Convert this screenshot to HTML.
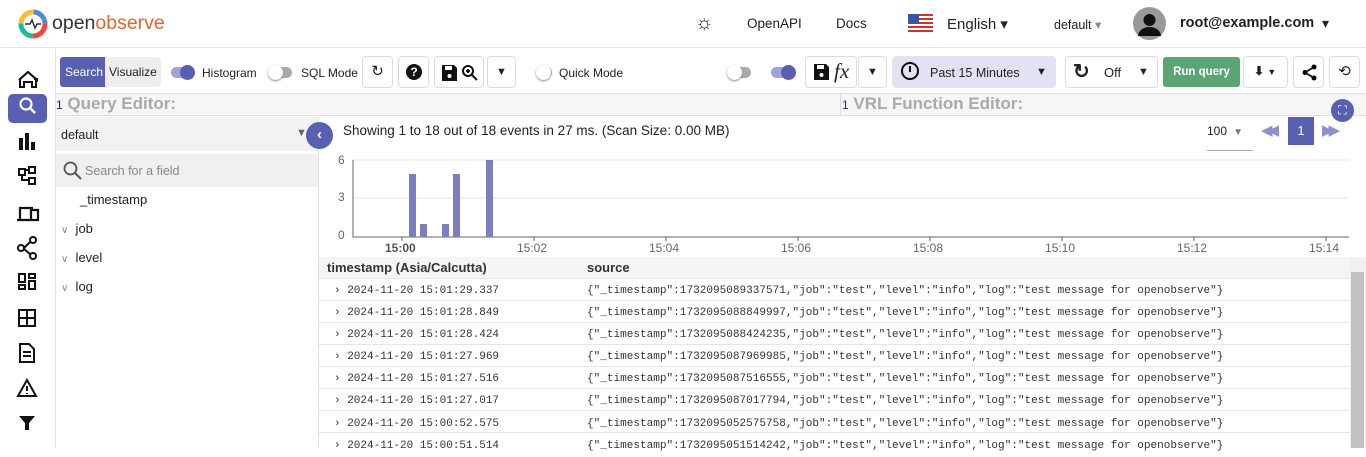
<!DOCTYPE html>
<html><head><meta charset="utf-8"><style>
*{box-sizing:border-box;margin:0;padding:0}
body{width:1366px;height:448px;overflow:hidden;background:#fff;font-family:"Liberation Sans",sans-serif;color:#222;position:relative;font-size:13px}
.a{position:absolute}
.btn{position:absolute;border:1px solid #ddd;border-radius:4px;background:#fff;height:32px;top:56px}
.mono{font-family:"Liberation Mono",monospace;font-size:11px;color:#333}
.row{position:absolute;left:319px;width:1031px;height:22px;border-bottom:1px solid #e6e6e6}
</style></head><body>
<!-- header -->
<div class="a" style="left:0;top:0;width:1366px;height:48px;border-bottom:1px solid #e0e0e0"></div>
<svg class="a" style="left:18px;top:9px" width="30" height="30" viewBox="0 0 30 30"><circle cx="15" cy="15" r="12" fill="none" stroke="#e44" stroke-width="5" stroke-dasharray="19 57"/><circle cx="15" cy="15" r="12" fill="none" stroke="#2b9" stroke-width="5" stroke-dasharray="0 19 19 38"/><circle cx="15" cy="15" r="12" fill="none" stroke="#fb3" stroke-width="5" stroke-dasharray="0 38 19 19"/><circle cx="15" cy="15" r="12" fill="none" stroke="#58c" stroke-width="5" stroke-dasharray="0 57 19 0"/><path d="M7 15h5l2-4 3 8 2-4h4" fill="none" stroke="#333" stroke-width="1.5"/></svg>
<div class="a" style="left:52px;top:12px;font-size:19.5px;color:#333">open<span style="color:#e8632b">observe</span></div>
<div class="a" style="left:695px;top:12px;font-size:20px">☼</div>
<div class="a" style="left:747px;top:16px;font-size:13.5px">OpenAPI</div>
<div class="a" style="left:836px;top:16px;font-size:13.5px">Docs</div>
<svg class="a" style="left:908px;top:14px" width="25" height="18"><rect width="25" height="18" fill="#fff"/><g fill="#c33"><rect y="0" width="25" height="2"/><rect y="4" width="25" height="2"/><rect y="8" width="25" height="2"/><rect y="12" width="25" height="2"/><rect y="16" width="25" height="2"/></g><rect width="11" height="10" fill="#35a"/></svg>
<div class="a" style="left:947px;top:15px;font-size:15px">English ▾</div>
<div class="a" style="left:1054px;top:17px;font-size:12.5px">default <span style="color:#888">▾</span></div>
<svg class="a" style="left:1133px;top:7px" width="33" height="33"><circle cx="16.5" cy="16.5" r="16.5" fill="#999"/><circle cx="16.5" cy="13" r="6" fill="#111"/><path d="M5 29a11.5 9 0 0 1 23 0z" fill="#111"/></svg>
<div class="a" style="left:1180px;top:15px;font-size:14.5px;font-weight:bold">root@example.com</div>
<div class="a" style="left:1322px;top:15px;font-size:14px">▾</div>
<!-- sidebar -->
<div class="a" style="left:55px;top:49px;width:1px;height:399px;background:#e0e0e0"></div>
<div class="a" style="left:8px;top:94px;width:39px;height:29px;background:#5960b2;border-radius:5px"></div>
<svg class="a" style="left:0;top:60px" width="55" height="380" fill="#111"><path d="M19 20l9-8 9 8v-1h-2v-1M20 19v8h4v-5h8v5h4v-8l-8-7z" fill="none" stroke="#111" stroke-width="2"/>
<circle cx="26" cy="44" r="5.5" fill="none" stroke="#fff" stroke-width="2.2"/><path d="M30 48l5 5" stroke="#fff" stroke-width="2.5"/>
<rect x="19" y="78" width="4" height="12"/><rect x="25" y="73" width="4" height="17"/><rect x="31" y="82" width="4" height="8"/>
<path d="M19 109h6v6h-6zM29 107h6v6h-6zM29 118h6v6h-6zM22 115v5h7M25 110h4" fill="none" stroke="#111" stroke-width="2"/>
<path d="M20 159v-11h13M17 160h18M31 150h7v10h-7z" fill="none" stroke="#111" stroke-width="2.2"/>
<circle cx="21" cy="188" r="3" fill="none" stroke="#111" stroke-width="2"/><circle cx="33" cy="180" r="3" fill="none" stroke="#111" stroke-width="2"/><circle cx="33" cy="196" r="3" fill="none" stroke="#111" stroke-width="2"/><path d="M24 188l6-6M24 189l6 5" stroke="#111" stroke-width="2"/>
<path d="M19 214h6v8h-6zM29 214h6v4h-6zM19 225h6v4h-6zM29 221h6v8h-6z" fill="none" stroke="#111" stroke-width="2"/>
<path d="M19 250h16v16h-16zM27 250v16M19 258h16" fill="none" stroke="#111" stroke-width="2"/>
<path d="M20 284h9l5 5v13h-14zM23 292h8M23 296h8" fill="none" stroke="#111" stroke-width="2"/>
<path d="M27 320l9 16h-18zM27 326v5M27 333v1" fill="none" stroke="#111" stroke-width="2"/>
<path d="M19 356h16l-6 7v7h-4v-7z"/></svg>
<!-- toolbar -->
<div class="a" style="left:56px;top:93px;width:1310px;height:1px;background:#e0e0e0"></div>
<div class="a" style="left:60px;top:57px;width:45px;height:30px;background:#5960b2;color:#fff;border-radius:3px 0 0 3px;font-size:12px;padding:8px 0 0 5px">Search</div>
<div class="a" style="left:105px;top:57px;width:56px;height:30px;background:#eee;border-radius:0 3px 3px 0;font-size:12px;padding:8px 0 0 4px">Visualize</div>
<div class="a" style="left:171px;top:67px;width:22px;height:11px;border-radius:6px;background:#9fa3d8"></div><div class="a" style="left:180px;top:65px;width:15px;height:15px;border-radius:50%;background:#5960b2"></div>
<div class="a" style="left:202px;top:66px;font-size:12px">Histogram</div>
<div class="a" style="left:272px;top:67px;width:20px;height:11px;border-radius:6px;background:#aaa"></div><div class="a" style="left:268px;top:65px;width:15px;height:15px;border-radius:50%;background:#fff;box-shadow:0 1px 2px #888"></div>
<div class="a" style="left:301px;top:66px;font-size:12px">SQL Mode</div>
<div class="btn" style="left:362px;width:31px;text-align:center;font-size:15px;padding-top:5px">↻</div>
<div class="btn" style="left:398px;width:31px"><div class="a" style="left:7px;top:7px;width:16px;height:16px;border-radius:50%;background:#111;color:#fff;font-size:12px;font-weight:bold;text-align:center;line-height:16px">?</div></div>
<div class="btn" style="left:434px;width:50px"><svg class="a" style="left:6px;top:7px" width="40" height="18"><path d="M1 1h12l3 3v13h-15z" fill="#111"/><rect x="4" y="2" width="7" height="4" fill="#fff"/><circle cx="8.5" cy="12" r="2" fill="#fff"/><circle cx="27" cy="7" r="5" fill="none" stroke="#111" stroke-width="2"/><path d="M31 11l5 5M25 7h4M27 5v4" stroke="#111" stroke-width="2"/></svg></div>
<div class="btn" style="left:487px;width:29px;text-align:center;font-size:11px;padding-top:9px">▼</div>
<div class="a" style="left:540px;top:67px;width:12px;height:11px;border-radius:6px;background:#aaa"></div><div class="a" style="left:536px;top:65px;width:15px;height:15px;border-radius:50%;background:#fff;box-shadow:0 1px 2px #888"></div>
<div class="a" style="left:559px;top:66px;font-size:12px">Quick Mode</div>
<div class="a" style="left:731px;top:67px;width:20px;height:11px;border-radius:6px;background:#aaa"></div><div class="a" style="left:727px;top:65px;width:15px;height:15px;border-radius:50%;background:#fff;box-shadow:0 1px 2px #888"></div>
<div class="a" style="left:771px;top:67px;width:22px;height:11px;border-radius:6px;background:#9fa3d8"></div><div class="a" style="left:781px;top:65px;width:15px;height:15px;border-radius:50%;background:#5960b2"></div>
<div class="btn" style="left:805px;width:52px"><svg class="a" style="left:7px;top:6px" width="18" height="18"><path d="M1 1h12l3 3v13h-15z" fill="#111"/><rect x="4" y="2" width="7" height="4" fill="#fff"/><circle cx="8.5" cy="12" r="2" fill="#fff"/></svg><span class="a" style="left:28px;top:2px;font-family:'Liberation Serif',serif;font-style:italic;font-size:21px">fx</span></div>
<div class="btn" style="left:858px;width:29px;text-align:center;font-size:11px;padding-top:9px">▼</div>
<div class="btn" style="left:892px;width:164px;background:#e1e3f2;border-color:#e1e3f2"><span class="a" style="left:8px;top:5px;width:18px;height:18px;border:2px solid #111;border-radius:50%"></span><span class="a" style="left:16px;top:9px;width:2px;height:6px;background:#111"></span><span class="a" style="left:37px;top:9px;font-size:12.5px">Past 15 Minutes</span><span class="a" style="left:143px;top:9px;font-size:11px">▼</span></div>
<div class="btn" style="left:1065px;width:93px"><span class="a" style="left:7px;top:2px;font-size:20px;font-weight:bold">↻</span><span class="a" style="left:38px;top:8px;font-size:13px">Off</span><span class="a" style="left:72px;top:9px;font-size:11px">▼</span></div>
<div class="a" style="left:1163px;top:57px;width:77px;height:30px;background:#5ba574;border-radius:3px;color:#fff;font-size:11.5px;font-weight:bold;text-align:center;line-height:30px">Run query</div>
<div class="btn" style="left:1243px;width:45px;font-size:12px;padding:7px 0 0 10px;font-weight:bold">⬇ <span style="font-size:9px">▼</span></div>
<div class="btn" style="left:1293px;width:31px"><svg class="a" style="left:8px;top:7px" width="16" height="17"><circle cx="12" cy="3" r="2.5"/><circle cx="3" cy="8.5" r="2.5"/><circle cx="12" cy="14" r="2.5"/><path d="M12 3L3 8.5 12 14" stroke="#111" stroke-width="1.8" fill="none"/></svg></div>
<div class="btn" style="left:1329px;width:31px;text-align:center;font-size:15px;padding-top:5px">⟲</div>
<!-- editors -->
<div class="a" style="left:56px;top:94px;width:1310px;height:22px;background:#f6f6f6;border-bottom:1px solid #e0e0e0"></div>
<div class="a" style="left:840px;top:94px;width:1px;height:22px;background:#ddd"></div>
<div class="a" style="left:56px;top:94px;font-size:17px;font-weight:bold;color:#aaa"><span style="font-size:12px;font-weight:normal;color:#237">1</span> Query Editor:</div>
<div class="a" style="left:842px;top:94px;font-size:17px;font-weight:bold;color:#aaa"><span style="font-size:12px;font-weight:normal;color:#237">1</span> VRL Function Editor:</div>
<div class="a" style="left:1331px;top:99px;width:23px;height:23px;border-radius:50%;background:#5960b2;color:#fff;font-size:12px;text-align:center;line-height:22px">⛶</div>
<!-- field panel -->
<div class="a" style="left:56px;top:117px;width:262px;height:34px;background:#f2f2f2"></div>
<div class="a" style="left:61px;top:128px;font-size:12.5px">default</div>
<div class="a" style="left:296px;top:127px;font-size:11px;color:#666">▼</div>
<div class="a" style="left:56px;top:154px;width:262px;height:33px;background:#f0f0f0"></div>
<svg class="a" style="left:63px;top:161px" width="19" height="19"><circle cx="7.5" cy="7.5" r="6" fill="none" stroke="#555" stroke-width="1.8"/><path d="M12 12l6 6" stroke="#555" stroke-width="2"/></svg>
<div class="a" style="left:85px;top:164px;font-size:12.5px;color:#888">Search for a field</div>
<div class="a" style="left:80px;top:192px;font-size:13px">_timestamp</div>
<div class="a" style="left:61px;top:221px;font-size:13px"><span style="color:#888;font-size:10px">∨</span>&nbsp;&nbsp;job</div>
<div class="a" style="left:61px;top:250px;font-size:13px"><span style="color:#888;font-size:10px">∨</span>&nbsp;&nbsp;level</div>
<div class="a" style="left:61px;top:279px;font-size:13px"><span style="color:#888;font-size:10px">∨</span>&nbsp;&nbsp;log</div>
<div class="a" style="left:318px;top:117px;width:1px;height:331px;background:#e0e0e0"></div>
<div class="a" style="left:306px;top:122px;width:27px;height:27px;border-radius:50%;background:#5960b2;color:#fff;font-size:15px;font-weight:bold;text-align:center;line-height:26px">‹</div>
<!-- results -->
<div class="a" style="left:343px;top:123px;font-size:13.5px">Showing 1 to 18 out of 18 events in 27 ms. (Scan Size: 0.00 MB)</div>
<div class="a" style="left:1207px;top:124px;font-size:12px">100 <span style="color:#777;font-size:10px">&nbsp;▼</span></div>
<div class="a" style="left:1207px;top:150px;width:46px;height:1px;background:#aaa"></div>
<div class="a" style="left:1261px;top:121px;font-size:15px;color:#8c90cc;letter-spacing:-5px">◀◀</div>
<div class="a" style="left:1288px;top:117px;width:26px;height:28px;background:#5960b2;color:#fff;font-size:13px;text-align:center;line-height:28px">1</div>
<div class="a" style="left:1322px;top:121px;font-size:15px;color:#8c90cc;letter-spacing:-5px">▶▶</div>
<svg class="a" style="left:319px;top:150px" width="1031" height="108" font-family="Liberation Sans" font-size="12" fill="#666">
<path d="M34 10H1030M34 48H1030" stroke="#e6e6e6"/><path d="M34 10V87H1030" stroke="#666" fill="none"/>
<text x="19" y="14">6</text><text x="19" y="51">3</text><text x="19" y="89">0</text>
<g fill="#7b7fc0"><rect x="90" y="24" width="7" height="63"/><rect x="101" y="74" width="7" height="13"/><rect x="123" y="74" width="7" height="13"/><rect x="134" y="24" width="7" height="63"/><rect x="167" y="10" width="7" height="77"/></g>
<g stroke="#666"><path d="M83 87v4M215 87v4M347 87v4M479 87v4M611 87v4M743 87v4M875 87v4M1007 87v4"/></g>
<text x="66" y="102" font-weight="bold" fill="#555">15:00</text><text x="198" y="102">15:02</text><text x="330" y="102">15:04</text><text x="462" y="102">15:06</text><text x="594" y="102">15:08</text><text x="726" y="102">15:10</text><text x="858" y="102">15:12</text><text x="990" y="102">15:14</text></svg>
<div class="a" style="left:319px;top:257px;width:1031px;height:22px;background:#f5f5f5;border-bottom:1px solid #e6e6e6"></div>
<div class="a" style="left:327px;top:260px;font-size:13px;font-weight:bold;color:#333">timestamp (Asia/Calcutta)</div>
<div class="a" style="left:587px;top:260px;font-size:13px;font-weight:bold;color:#333">source</div>
<div class="a" style="left:1350px;top:257px;width:16px;height:191px;background:#f0f0f0"></div>
<div class="a" style="left:1351px;top:272px;width:13px;height:176px;background:#c1c1c1"></div>
<div class="row" style="top:279px"></div><div class="row" style="top:301px"></div><div class="row" style="top:323px"></div><div class="row" style="top:345px"></div><div class="row" style="top:367px"></div><div class="row" style="top:389px"></div><div class="row" style="top:411px"></div>
<div class="a mono" style="left:334px;top:280px;line-height:22.1px;white-space:pre">› 2024-11-20 15:01:29.337
› 2024-11-20 15:01:28.849
› 2024-11-20 15:01:28.424
› 2024-11-20 15:01:27.969
› 2024-11-20 15:01:27.516
› 2024-11-20 15:01:27.017
› 2024-11-20 15:00:52.575
› 2024-11-20 15:00:51.514</div>
<div class="a mono" style="left:587px;top:280px;line-height:22.1px;white-space:pre;font-size:11.05px">{"_timestamp":1732095089337571,"job":"test","level":"info","log":"test message for openobserve"}
{"_timestamp":1732095088849997,"job":"test","level":"info","log":"test message for openobserve"}
{"_timestamp":1732095088424235,"job":"test","level":"info","log":"test message for openobserve"}
{"_timestamp":1732095087969985,"job":"test","level":"info","log":"test message for openobserve"}
{"_timestamp":1732095087516555,"job":"test","level":"info","log":"test message for openobserve"}
{"_timestamp":1732095087017794,"job":"test","level":"info","log":"test message for openobserve"}
{"_timestamp":1732095052575758,"job":"test","level":"info","log":"test message for openobserve"}
{"_timestamp":1732095051514242,"job":"test","level":"info","log":"test message for openobserve"}</div>
</body></html>
